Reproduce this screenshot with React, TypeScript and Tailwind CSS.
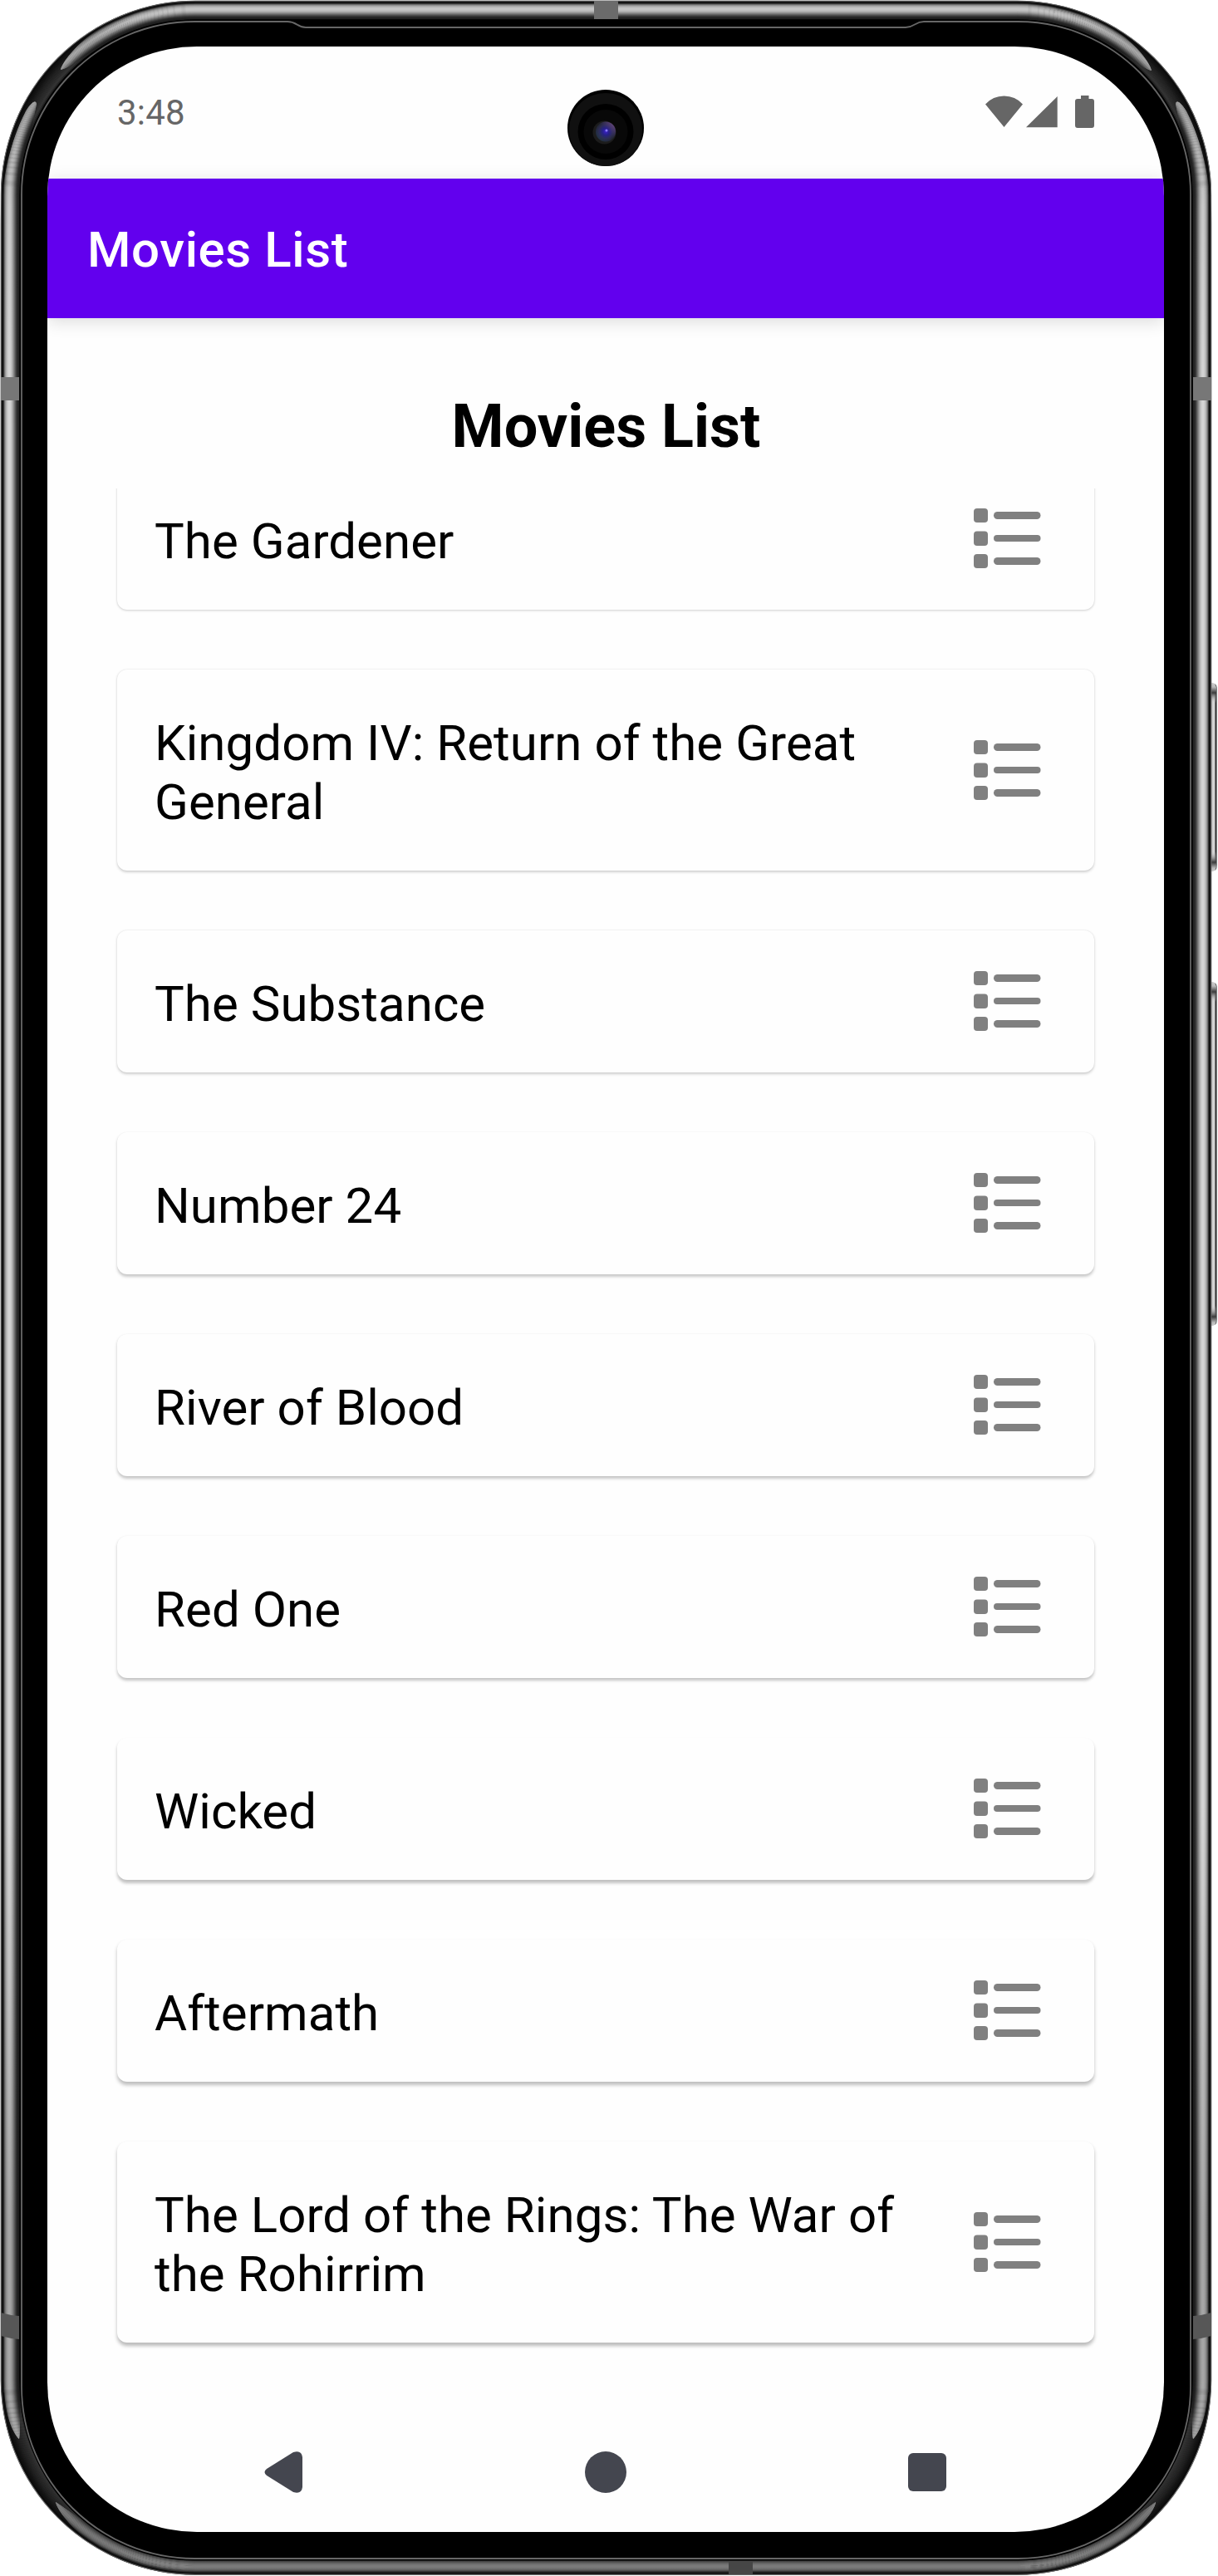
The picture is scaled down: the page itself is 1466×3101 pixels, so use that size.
const movies = [
  { title: "The Gardener", wrap: false },
  { title: "Kingdom IV: Return of the Great General", wrap: true },
  { title: "The Substance", wrap: false },
  { title: "Number 24", wrap: false },
  { title: "River of Blood", wrap: false },
  { title: "Red One", wrap: false },
  { title: "Wicked", wrap: false },
  { title: "Aftermath", wrap: false },
  { title: "The Lord of the Rings: The War of the Rohirrim", wrap: true },
];

// Grey levels across the polished rim, from the outer edge inwards.
const rim = [
  "#606060", "#161616", "#0c0c0c", "#2c2c2c", "#6a6a6a", "#909090", "#adadad", "#bfbfbf",
  "#cccccc", "#d4d4d4", "#d6d6d6", "#d2d2d2", "#c8c8c8", "#bababa", "#a6a6a6", "#8e8e8e",
  "#757575", "#5c5c5c", "#444444", "#303030", "#282828", "#222222",
];

// Grey levels of the rim where no highlight falls on it.
const rimShadow = [
  "#777", "#141414", "#0b0b0b", "#101010", "#121212", "#141414", "#161616", "#191919",
  "#1c1c1c", "#1f1f1f", "#222", "#242424", "#262626", "#282828", "#2a2a2a", "#2c2c2c",
  "#2e2e2e", "#303030", "#333", "#363636", "#303030", "#222",
];

function Ring({ inset, color, width = 1.4 }: { inset: number; color: string; width?: number }) {
  return (
    <rect
      x={1 + inset}
      y={1 + inset}
      width={1457 - inset * 2}
      height={3098.5 - inset * 2}
      rx={234 - inset}
      fill="none"
      stroke={color}
      strokeWidth={width}
    />
  );
}

function SideButton({ y, h, id }: { y: number; h: number; id: string }) {
  return (
    <g>
      <defs>
        <linearGradient id={id} x1="0" x2="1" y1="0" y2="0">
          <stop offset="0" stopColor="#c4c4c4" />
          <stop offset=".55" stopColor="#dcdcdc" />
          <stop offset=".68" stopColor="#444" />
          <stop offset=".82" stopColor="#3a3a3a" />
          <stop offset="1" stopColor="#aaa" />
        </linearGradient>
        <linearGradient id={id + "v"} x1="0" x2="0" y1="0" y2={h} gradientUnits="userSpaceOnUse">
          <stop offset="0" stopColor="#ccc" />
          <stop offset={5 / h} stopColor="#bbb" />
          <stop offset={12 / h} stopColor="#3a3a3a" />
          <stop offset={24 / h} stopColor="#ccc" stopOpacity="0" />
          <stop offset={1 - 24 / h} stopColor="#ccc" stopOpacity="0" />
          <stop offset={1 - 11 / h} stopColor="#3a3a3a" />
          <stop offset={1 - 4 / h} stopColor="#bbb" />
          <stop offset="1" stopColor="#ccc" />
        </linearGradient>
      </defs>
      <g transform={`translate(1458 ${y})`}>
        <path d={`M0 0Q7 0 7 8V${h - 8}Q7 ${h} 0 ${h}Z`} fill={`url(#${id})`} />
        <path d={`M0 0Q6 0 6 8V${h - 8}Q6 ${h} 0 ${h}Z`} fill={`url(#${id}v)`} />
      </g>
    </g>
  );
}

function PhoneFrame() {
  return (
    <svg className="absolute inset-0" width="1466" height="3101" viewBox="0 0 1466 3101" aria-hidden="true">
      <defs>
        <clipPath id="shine">
          <path d="M0 270V2880H5C7 2906 14 2927 23 2936C25 2925 24 2880 24 2840V270C25 220 37 160 44 125C43 119 37 124 31 134C10 175 2 220 0 270Z" />
          <path d="M1459 270V2880H1454C1452 2906 1445 2927 1436 2936C1434 2925 1435 2880 1435 2840V270C1434 220 1422 160 1415 125C1416 119 1422 124 1428 134C1449 175 1457 220 1459 270Z" />
          <path d="M73 84C75 75 91 55 110 41C145 14 190 0 240 0H1219C1269 0 1314 14 1349 41C1368 55 1384 75 1386 85C1373 82 1347 57 1320 46C1290 31 1250 25 1219 24H240C209 25 169 31 139 46C112 57 86 82 73 84Z" />
          <path d="M67 3012C69 3021 85 3042 104 3057C140 3087 190 3101 240 3101H1219C1269 3101 1319 3087 1355 3057C1374 3042 1390 3021 1391 3012C1376 3022 1350 3043 1324 3055C1290 3072 1250 3077 1219 3077H240C209 3077 169 3072 135 3055C109 3043 83 3022 67 3012Z" />
        </clipPath>
        <linearGradient id="vshade" x1="0" x2="0" y1="0" y2="3101" gradientUnits="userSpaceOnUse">
          <stop offset="0" stopColor="#000" stopOpacity="0.04" />
          <stop offset=".015" stopColor="#000" stopOpacity="0.2" />
          <stop offset=".035" stopColor="#000" stopOpacity="0.26" />
          <stop offset=".08" stopColor="#000" stopOpacity="0.06" />
          <stop offset=".15" stopColor="#000" stopOpacity="0" />
          <stop offset=".7" stopColor="#000" stopOpacity="0" />
          <stop offset=".86" stopColor="#000" stopOpacity="0.22" />
          <stop offset=".94" stopColor="#000" stopOpacity="0.22" />
          <stop offset=".98" stopColor="#000" stopOpacity="0.45" />
          <stop offset="1" stopColor="#000" stopOpacity="0.38" />
        </linearGradient>
        <radialGradient id="lens">
          <stop offset="0" stopColor="#3c22c8" />
          <stop offset=".35" stopColor="#25208a" />
          <stop offset=".7" stopColor="#2d2d50" />
          <stop offset="1" stopColor="#20252c" />
        </radialGradient>
        <linearGradient id="tint" x1="0" x2="1" y1="1" y2="0">
          <stop offset="0" stopColor="#1f4a50" stopOpacity=".7" />
          <stop offset=".5" stopColor="#2a2470" stopOpacity="0" />
          <stop offset="1" stopColor="#a868b8" stopOpacity=".9" />
        </linearGradient>
      </defs>
      <SideButton id="power" y={822} h={227} />
      <SideButton id="volume" y={1182} h={414} />
      <rect x="1" y="1" width="1457" height="3098.5" rx="234" fill="#000" />
      {rimShadow.map((c, i) => (
        <Ring key={i} inset={i + 0.5} color={c} />
      ))}
      <g clipPath="url(#shine)">
        {rim.map((c, i) => (
          <Ring key={i} inset={i + 0.5} color={c} />
        ))}
        <rect x="4" y="4" width="1451" height="3092" rx="230" fill="url(#vshade)" />
      </g>
      <rect x="24" y="23.5" width="1411" height="3059" rx="210" fill="#000" />
      <path
        d="M234 26H346C357 26 358 33 368 33H1090C1101 33 1101 26 1112 26H1225C1339 26 1433 120 1433 234V2873C1433 2987 1339 3080 1225 3080H234C120 3080 26 2987 26 2873V234C26 120 120 26 234 26Z"
        fill="none"
        stroke="#666"
        strokeWidth="1.8"
      />
      <g fill="#777">
        <rect x="1" y="454" width="22" height="28" />
        <rect x="1436" y="454" width="22" height="28" />
        <rect x="715" y="1" width="29" height="22" fill="#6b6b6b" />
        <path d="M1 2784Q11 2787 23 2788V2816Q11 2815 1 2812Z" fill="#575757" />
        <path d="M1458 2784Q1448 2787 1436 2788V2816Q1448 2815 1458 2812Z" fill="#575757" />
        <rect x="877" y="3083" width="29" height="16" fill="#464646" />
      </g>
    </svg>
  );
}

function Camera() {
  return (
    <svg className="absolute left-[625px] top-[51px]" width="94" height="94" viewBox="0 0 94 94" aria-hidden="true">
      <circle cx="47" cy="47" r="46" fill="#000" />
      <circle cx="47" cy="49" r="44" fill="#101010" />
      <circle cx="47" cy="51.500" r="33.500" fill="#000" />
      <circle cx="47" cy="51.500" r="26.500" fill="#080808" />
      <circle cx="45.500" cy="52.500" r="14" fill="#1c1c1c" />
      <circle cx="47" cy="51.500" r="12" fill="url(#lens)" />
      <circle cx="47" cy="51.500" r="12" fill="url(#tint)" />
      <circle cx="48" cy="50" r="1.500" fill="#8a7bff" />
    </svg>
  );
}

function ListIcon() {
  return (
    <svg width="82" height="74" viewBox="0 0 82 74" fill="#808080" aria-hidden="true">
      <rect x="0" y="1" width="17" height="17" rx="4" />
      <rect x="0" y="28.500" width="17" height="17.500" rx="4" />
      <rect x="0" y="56" width="17" height="17" rx="4" />
      <rect x="24" y="5" width="56.500" height="9" rx="4.500" />
      <rect x="24" y="33" width="56.500" height="8" rx="4" />
      <rect x="24" y="60" width="56.500" height="9" rx="4.500" />
    </svg>
  );
}

function MovieCard({ title, wrap, index }: { title: string; wrap: boolean; index: number }) {
  const drop = 1 + index * 0.35;
  const alpha = 0.17 + index * 0.012;
  const halo = Math.max(0.01, 0.08 - index * 0.012);
  return (
    <li
      className={`flex shrink-0 justify-between rounded-[12px] bg-[#fefefe] pl-[45px] pr-[63px] ${wrap ? "h-[242px]" : "h-[171px] pb-px"}`}
      style={{ boxShadow: `0 ${drop}px ${3 + index * 0.15}px rgba(0,0,0,${alpha}), 0 0 2px rgba(0,0,0,${halo})` }}
    >
      <span className="w-[930px] pt-[53px] text-[60px] leading-[71px] tracking-[0.055px] text-black">{title}</span>
      <span className="flex items-center">
        <ListIcon />
      </span>
    </li>
  );
}

export default function App() {
  return (
    <div className="relative h-[3101px] w-[1466px] overflow-hidden bg-white font-['Roboto',sans-serif]">
      <PhoneFrame />
      <main className="relative ml-[57px] mt-[56px] flex h-[2992px] w-[1344px] flex-col overflow-hidden rounded-[180px] bg-[#fefefe]">
        <div className="flex h-[159px] shrink-0 items-start justify-between pl-[84px] pr-[83px] text-[#666]">
          <span className="mt-[55px] text-[42px] leading-[50px] tracking-[0.2px]">3:48</span>
          <svg className="mt-[58px]" width="133" height="42" viewBox="1185 114 133 42" fill="#666" aria-hidden="true">
            <path d="M1208.500 153L1186 125.500Q1195 115.500 1208.500 115.500T1231 125.500Z" />
            <path d="M1235 153.300L1272.700 116V153.300Z" />
            <path d="M1301 115H1310.500V119H1314Q1317 119 1317 122V151Q1317 154 1314 154H1297Q1294 154 1294 151V122Q1294 119 1297 119H1301Z" />
          </svg>
        </div>
        <header className="z-10 flex h-[168px] shrink-0 items-center bg-[#6200ee] pl-[48px] pt-[4px] shadow-[0_4px_20px_rgba(0,0,0,0.14)]">
          <span className="text-[60px] font-medium leading-[72px] tracking-[0.6px] text-white">Movies List</span>
        </header>
        <h1 className="flex h-[205px] shrink-0 justify-center pl-px pt-[89px] text-[72px] font-bold leading-[84px] text-black">Movies List</h1>
        <ul className="flex h-[2277px] shrink-0 flex-col justify-end gap-[72px] overflow-hidden px-[84px] pb-[45px]">
          {movies.map((m, i) => (
            <MovieCard key={m.title} {...m} index={i} />
          ))}
        </ul>
        <nav className="flex flex-1 items-center justify-between pl-[260px] pr-[262px] pt-[39px]">
          <svg width="48" height="52" viewBox="0 0 48 52" fill="#44464f" aria-hidden="true">
            <path d="M4 22L36 2Q46 -1 47 8V44Q46 53 36 50L4 30Q-1 26 4 22Z" />
          </svg>
          <span className="size-[50px] rounded-full bg-[#44464f]" />
          <span className="size-[46px] rounded-[6px] bg-[#44464f]" />
        </nav>
        <Camera />
      </main>
    </div>
  );
}
